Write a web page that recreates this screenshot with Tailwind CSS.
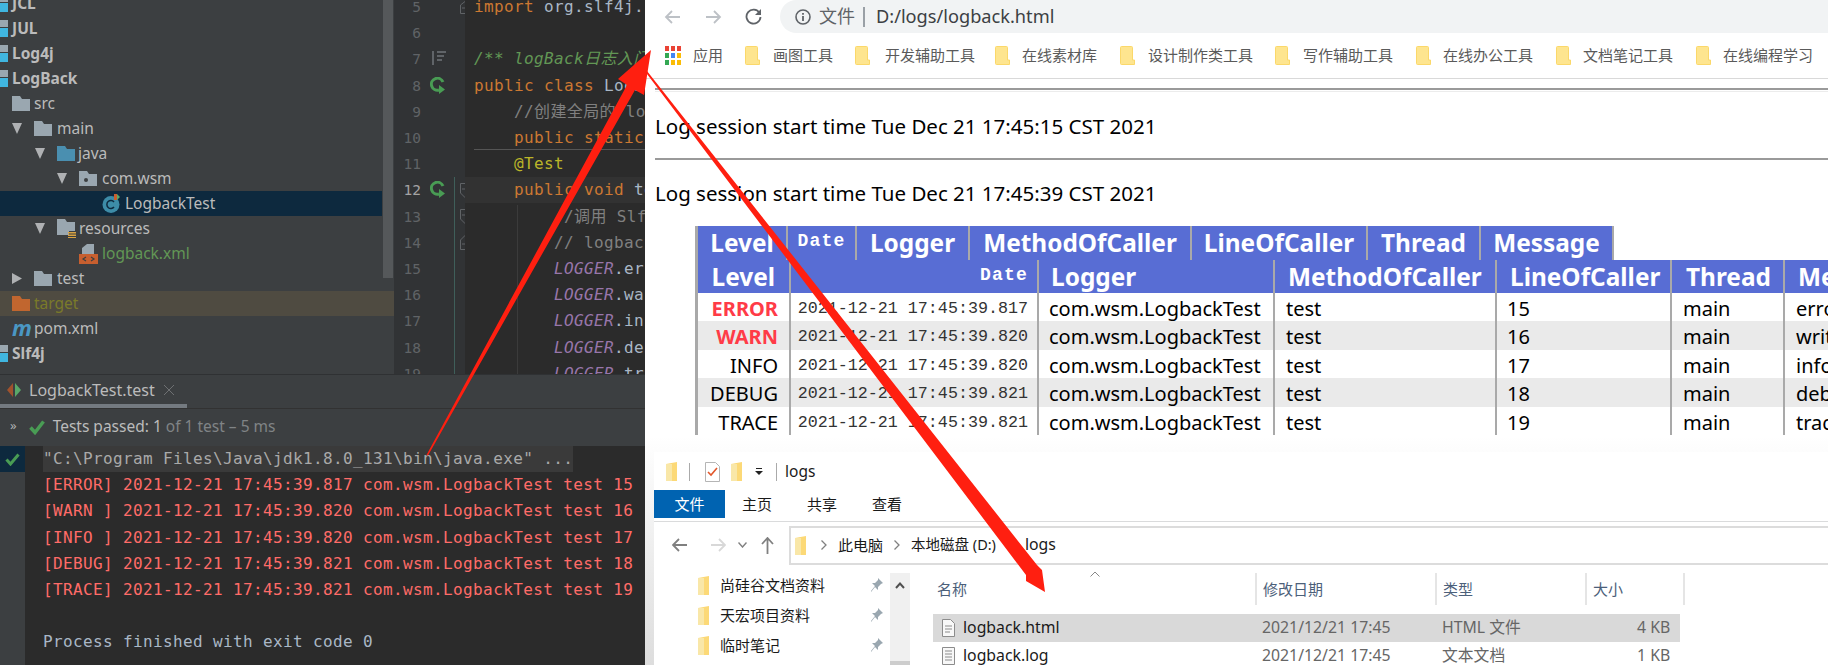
<!DOCTYPE html>
<html lang="zh">
<head>
<meta charset="utf-8">
<title>logback</title>
<script src="https://cdn.jsdelivr.net/npm/@tailwindcss/browser@4"></script>
</head>
<body class="m-0 w-[1828px] h-[665px] overflow-hidden bg-white">
<div class="relative flex w-[1828px] h-[665px] overflow-hidden font-['Noto_Sans','Noto_Sans_CJK_SC',sans-serif]">

  <!-- IDE -->
  <div class="w-[645px] h-[665px] shrink-0 flex flex-col bg-[#3c3f41] overflow-hidden">
    <div class="flex h-[374px] shrink-0 overflow-hidden">
      <!-- project tree -->
      <div class="w-[394px] shrink-0 flex overflow-hidden text-[15.5px] text-[#bbbbbb]">
        <div class="w-[382px] -mt-[9px] flex flex-col">
          <div class="h-[25px] flex items-center gap-[4px] font-bold shrink-0"><span class="w-[8px] h-[17px] flex flex-col"><i class="h-[7px] bg-[#9aa7b0]"></i><i class="h-[10px] bg-[#40b6e0] mt-px"></i></span>JCL</div>
          <div class="h-[25px] flex items-center gap-[4px] font-bold shrink-0"><span class="w-[8px] h-[17px] flex flex-col"><i class="h-[7px] bg-[#9aa7b0]"></i><i class="h-[9px] bg-[#40b6e0] mt-px"></i></span>JUL</div>
          <div class="h-[25px] flex items-center gap-[4px] font-bold shrink-0"><span class="w-[8px] h-[17px] flex flex-col"><i class="h-[7px] bg-[#9aa7b0]"></i><i class="h-[9px] bg-[#40b6e0] mt-px"></i></span>Log4j</div>
          <div class="h-[25px] flex items-center gap-[4px] font-bold shrink-0"><span class="w-[8px] h-[17px] flex flex-col"><i class="h-[7px] bg-[#9aa7b0]"></i><i class="h-[9px] bg-[#40b6e0] mt-px"></i></span>LogBack</div>
          <div class="h-[25px] flex items-center shrink-0 pl-[12px] gap-[4px]">
            <svg width="18" height="15" viewBox="0 0 18 15"><path d="M0 0h8l2 3h8v12H0z" fill="#9aa7b0"/></svg>src</div>
          <div class="h-[25px] flex items-center shrink-0 pl-[12px]">
            <svg class="mr-[12px]" width="10" height="11" viewBox="0 0 10 11"><path d="M0 0h10L5 11z" fill="#afb1b3"/></svg>
            <svg class="mr-[5px]" width="18" height="15" viewBox="0 0 18 15"><path d="M0 0h8l2 3h8v12H0z" fill="#9aa7b0"/></svg>main</div>
          <div class="h-[25px] flex items-center shrink-0 pl-[35px]">
            <svg class="mr-[12px]" width="10" height="11" viewBox="0 0 10 11"><path d="M0 0h10L5 11z" fill="#afb1b3"/></svg>
            <svg class="mr-[3px]" width="18" height="15" viewBox="0 0 18 15"><path d="M0 0h8l2 3h8v12H0z" fill="#4a8fb0"/></svg>java</div>
          <div class="h-[25px] flex items-center shrink-0 pl-[57px]">
            <svg class="mr-[12px]" width="10" height="11" viewBox="0 0 10 11"><path d="M0 0h10L5 11z" fill="#afb1b3"/></svg>
            <svg class="mr-[5px]" width="18" height="15" viewBox="0 0 18 15"><path d="M0 0h8l2 3h8v12H0z" fill="#9aa7b0"/><circle cx="7" cy="9" r="2" fill="#3c3f41"/></svg>com.wsm</div>
          <div class="h-[25px] flex items-center shrink-0 pl-[102px] bg-[#0d293e]">
            <svg class="mr-[5px]" width="18" height="19" viewBox="0 0 18 19"><circle cx="9" cy="10.500" r="8.500" fill="#3d8ca8"/><path d="M12 8a4 4 0 1 0 0 5" fill="none" stroke="#0d293e" stroke-width="1.500"/><path d="M12 0h3v6h-3z" fill="#c75f2f"/><path d="M15 0l3 3-3 3z" fill="#59a869"/></svg>LogbackTest</div>
          <div class="h-[25px] flex items-center shrink-0 pl-[35px]">
            <svg class="mr-[12px]" width="10" height="11" viewBox="0 0 10 11"><path d="M0 0h10L5 11z" fill="#afb1b3"/></svg>
            <svg class="mr-[3px]" width="19" height="19" viewBox="0 0 19 19"><path d="M0 0h8l2 3h8v9h-6v4H0z" fill="#9aa7b0"/><path d="M11 13h8v1.500h-8zM11 15.500h8V17h-8zM11 18h8v1h-8z" fill="#d9a343"/></svg>resources</div>
          <div class="h-[25px] flex items-center shrink-0 pl-[79px] text-[#629755]">
            <svg class="mr-[4px]" width="19" height="20" viewBox="0 0 19 20"><path d="M3 10V4l5-4h7v10z" fill="#9aa7b0"/><path d="M0 10h19v10H0z" fill="#c75f2f"/><path d="M7 13l-3 2 3 2M12 13l3 2-3 2" fill="none" stroke="#3c3f41" stroke-width="1.200"/></svg>logback.xml</div>
          <div class="h-[25px] flex items-center shrink-0 pl-[12px]">
            <svg class="mr-[12px]" width="10" height="11" viewBox="0 0 10 11"><path d="M0 0l10 5.500L0 11z" fill="#afb1b3"/></svg>
            <svg class="mr-[5px]" width="18" height="15" viewBox="0 0 18 15"><path d="M0 0h8l2 3h8v12H0z" fill="#9aa7b0"/></svg>test</div>
          <div class="h-[25px] flex items-center shrink-0 pl-[12px] gap-[4px] w-[394px] bg-[#4f4b41] text-[#7a7a2a]">
            <svg width="18" height="15" viewBox="0 0 18 15"><path d="M0 0h8l2 3h8v12H0z" fill="#c1662f"/></svg>target</div>
          <div class="h-[25px] flex items-center shrink-0 pl-[12px] gap-[4px]">
            <span class="w-[18px] text-[22px] leading-[20px] -mt-[3px] italic font-bold text-[#4a97c4]">m</span>pom.xml</div>
          <div class="h-[25px] flex items-center gap-[4px] font-bold shrink-0"><span class="w-[8px] h-[17px] flex flex-col"><i class="h-[7px] bg-[#9aa7b0]"></i><i class="h-[9px] bg-[#40b6e0] mt-px"></i></span>Slf4j</div>
        </div>
        <div class="w-[10px] ml-[1px] h-[278px] bg-[#55585a]"></div>
      </div>
      <!-- gutter -->
      <div class="relative w-[71px] shrink-0 bg-[#313335] overflow-hidden">
        <div class="-mt-[6px] w-[27px] text-right font-['DejaVu_Sans_Mono',monospace] text-[14.500px] leading-[26.200px] text-[#606366]">
          <div>5</div><div>6</div><div>7</div><div>8</div><div>9</div><div>10</div><div>11</div><div class="text-[#a4a3a3]">12</div><div>13</div><div>14</div><div>15</div><div>16</div><div>17</div><div>18</div><div>19</div>
        </div>
        <svg class="absolute left-[38px] top-[51px]" width="15" height="14" viewBox="0 0 15 14"><path d="M1 0v14M5 1h9M5 5h7M5 9h5" fill="none" stroke="#70757a" stroke-width="1.500"/></svg>
        <svg class="absolute left-[36px] top-[77px]" width="16" height="18" viewBox="0 0 16 18"><path d="M13 5a6 6 0 1 0-4 8" fill="none" stroke="#499c54" stroke-width="3"/><path d="M9 8l6 4.500L9 17z" fill="#499c54"/></svg>
        <svg class="absolute left-[36px] top-[181px]" width="16" height="18" viewBox="0 0 16 18"><path d="M13 5a6 6 0 1 0-4 8" fill="none" stroke="#499c54" stroke-width="3"/><path d="M9 8l6 4.500L9 17z" fill="#499c54"/></svg>
        <div class="absolute left-[60px] top-[177px] w-px h-[197px] bg-[#3f5f5a]"></div>
        <svg class="absolute left-[66px] top-[1px]" width="10" height="13" viewBox="0 0 10 13"><path d="M.5 4L5 .5 9.500 4v8.500h-9zM2 7h6" fill="none" stroke="#606366"/></svg>
        <svg class="absolute left-[66px] top-[183px]" width="10" height="15" viewBox="0 0 10 15"><path d="M.5 .5h9V10L5 14.500.5 10zM2 6h6" fill="none" stroke="#606366"/></svg>
        <svg class="absolute left-[66px] top-[209px]" width="10" height="15" viewBox="0 0 10 15"><path d="M.5 .5h9V10L5 14.500.5 10zM2 6h6" fill="none" stroke="#606366"/></svg>
        <svg class="absolute left-[66px] top-[235px]" width="10" height="15" viewBox="0 0 10 15"><path d="M.5 14.500h9V5L5 .5.500 5zM2 9h6" fill="none" stroke="#606366"/></svg>
      </div>
      <!-- code -->
      <div class="relative flex-1 bg-[#2b2b2b] overflow-hidden">
        <div class="absolute left-0 right-0 top-[177px] h-[26px] bg-[#323232]"></div>
        <div class="absolute left-[9px] right-0 top-[149px] h-px bg-[#555555]"></div>
        <div class="absolute left-[52px] top-[205px] w-px h-[169px] bg-[#3b3b3b]"></div>
        <div class="relative -mt-[6px] pl-[9px] [&>div]:whitespace-pre font-['DejaVu_Sans_Mono','Noto_Sans_CJK_SC',monospace] text-[16px] tracking-[0.37px] leading-[26.200px] text-[#a9b7c6]">
          <div><span class="text-[#cc7832]">import</span> org.slf4j.Logger;</div>
          <div>&nbsp;</div>
          <div class="italic text-[#629755]">/** logBack日志入门</div>
          <div><span class="text-[#cc7832]">public class</span> LogbackTest</div>
          <div class="text-[#808080]">    //创建全局的 logger</div>
          <div><span class="text-[#cc7832]">    public static</span></div>
          <div class="text-[#bbb529]">    @Test</div>
          <div><span class="text-[#cc7832]">    public void</span> test</div>
          <div class="text-[#808080]">        //调用 Slf</div>
          <div class="text-[#808080]">        // logback</div>
          <div>        <span class="italic text-[#9876aa]">LOGGER</span>.error</div>
          <div>        <span class="italic text-[#9876aa]">LOGGER</span>.warn</div>
          <div>        <span class="italic text-[#9876aa]">LOGGER</span>.info</div>
          <div>        <span class="italic text-[#9876aa]">LOGGER</span>.debug</div>
          <div>        <span class="italic text-[#9876aa]">LOGGER</span>.trace</div>
        </div>
      </div>
    </div>

    <!-- run panel -->
    <div class="flex-1 flex flex-col border-t border-[#2f3133] overflow-hidden">
      <div class="h-[34px] shrink-0 flex flex-col border-b border-[#323232]">
        <div class="flex-1 flex items-center text-[16px] text-[#bbbbbb]">
          <svg class="ml-[7px] mr-[8px]" width="14" height="14" viewBox="0 0 14 14"><path d="M6 0v14L0 7z" fill="#a0522d"/><path d="M8 0v14l6-7z" fill="#59a869"/></svg>
          LogbackTest.test
          <svg class="ml-[9px]" width="10" height="10" viewBox="0 0 10 10"><path d="M0 0l10 10M10 0L0 10" stroke="#6e7072" stroke-width="1"/></svg>
        </div>
        <div class="w-[187px] h-[4px] bg-[#747a80]"></div>
      </div>
      <div class="h-[37px] shrink-0 flex items-center text-[15.500px] text-[#bbbbbb] pb-px">
        <span class="ml-[10px] mr-[12px] text-[13px] leading-[13px] text-[#aeb0b2] -mt-[4px]">»</span>
        <svg class="mr-[8px]" width="16" height="15" viewBox="0 0 16 15"><path d="M1.500 7.500L6 12.500 14.500 1.500" fill="none" stroke="#499c54" stroke-width="3.500"/></svg>
        Tests passed:&nbsp;<span>1</span><span class="text-[#808486]">&nbsp;of 1 test – 5 ms</span>
      </div>
      <div class="flex-1 flex overflow-hidden">
        <div class="w-[25px] shrink-0">
          <div class="h-[26px] bg-[#0d293e] flex items-center justify-center"><svg width="15" height="13" viewBox="0 0 15 13"><path d="M1.500 6.500L5.500 11 13.500 1.500" fill="none" stroke="#499c54" stroke-width="3"/></svg></div>
        </div>
        <div class="flex-1 bg-[#2b2b2b] pl-[18px] [&>div]:whitespace-pre font-['DejaVu_Sans_Mono',monospace] text-[16px] tracking-[0.37px] leading-[26.200px] text-[#ff6b68] overflow-hidden">
          <div class="w-[530px] bg-[#3a3a3a] text-[#a9a9a9]">"C:\Program Files\Java\jdk1.8.0_131\bin\java.exe" ...</div>
          <div>[ERROR] 2021-12-21 17:45:39.817 com.wsm.LogbackTest test 15</div>
          <div>[WARN ] 2021-12-21 17:45:39.820 com.wsm.LogbackTest test 16</div>
          <div>[INFO ] 2021-12-21 17:45:39.820 com.wsm.LogbackTest test 17</div>
          <div>[DEBUG] 2021-12-21 17:45:39.821 com.wsm.LogbackTest test 18</div>
          <div>[TRACE] 2021-12-21 17:45:39.821 com.wsm.LogbackTest test 19</div>
          <div>&nbsp;</div>
          <div class="text-[#a9b7c6]">Process finished with exit code 0</div>
        </div>
      </div>
    </div>
  </div>

  <!-- browser -->
  <div class="flex-1 min-w-0 flex flex-col bg-white overflow-hidden">
    <div class="h-[33px] shrink-0 flex items-center">
      <svg class="ml-[19px]" width="17" height="16" viewBox="0 0 17 16"><path d="M16 8H2M8 2L2 8l6 6" fill="none" stroke="#bdc1c6" stroke-width="1.800"/></svg>
      <svg class="ml-[24px]" width="17" height="16" viewBox="0 0 17 16"><path d="M1 8h14M9 2l6 6-6 6" fill="none" stroke="#bdc1c6" stroke-width="1.800"/></svg>
      <svg class="ml-[23px]" width="17" height="17" viewBox="0 0 17 17"><path d="M14.500 5A7 7 0 1 0 15.500 9" fill="none" stroke="#5f6368" stroke-width="1.800"/><path d="M16 1v6h-6z" fill="#5f6368"/></svg>
      <div class="ml-[18px] flex-1 h-[33px] bg-[#f1f3f4] rounded-l-[17px] flex items-center">
        <svg class="ml-[15px]" width="16" height="16" viewBox="0 0 16 16"><circle cx="8" cy="8" r="7" fill="none" stroke="#5f6368" stroke-width="1.600"/><path d="M8 7v5M8 4v1.800" stroke="#5f6368" stroke-width="1.800"/></svg>
        <span class="ml-[8px] text-[18px] text-[#5f6368]">文件</span>
        <span class="ml-[8px] w-[2px] h-[20px] bg-[#9aa0a6]"></span>
        <span class="ml-[11px] text-[18.200px] text-[#3c4043]">D:/logs/logback.html</span>
      </div>
    </div>
    <div class="h-[46px] shrink-0 flex items-center border-b border-[#d9d9d9] text-[15px] text-[#5a5a5a] pl-[20px]">
      <svg class="mr-[12px]" width="16" height="19" viewBox="0 0 16 19"><g><rect width="4" height="5" fill="#ea4335"/><rect x="6" width="4" height="5" fill="#ea4335"/><rect x="12" width="4" height="5" fill="#ea4335"/><rect y="7" width="4" height="5" fill="#34a853"/><rect x="6" y="7" width="4" height="5" fill="#4285f4"/><rect x="12" y="7" width="4" height="5" fill="#fbbc05"/><rect y="14" width="4" height="5" fill="#34a853"/><rect x="6" y="14" width="4" height="5" fill="#fbbc05"/><rect x="12" y="14" width="4" height="5" fill="#fbbc05"/></g></svg>
      <span class="w-[52px]">应用</span>
      <svg class="mr-[13px]" width="15" height="19" viewBox="0 0 15 19"><path d="M1.500 .5h10a1 1 0 0 1 1 1V14h2v4.500h-13a1 1 0 0 1-1-1v-16a1 1 0 0 1 1-1z" fill="#fee58f" stroke="#fbd86a"/></svg>
      <span class="w-[82px] whitespace-nowrap">画图工具</span>
      <svg class="mr-[15px]" width="15" height="19" viewBox="0 0 15 19"><path d="M1.500 .5h10a1 1 0 0 1 1 1V14h2v4.500h-13a1 1 0 0 1-1-1v-16a1 1 0 0 1 1-1z" fill="#fee58f" stroke="#fbd86a"/></svg>
      <span class="w-[110px] whitespace-nowrap">开发辅助工具</span>
      <svg class="mr-[12px]" width="15" height="19" viewBox="0 0 15 19"><path d="M1.500 .5h10a1 1 0 0 1 1 1V14h2v4.500h-13a1 1 0 0 1-1-1v-16a1 1 0 0 1 1-1z" fill="#fee58f" stroke="#fbd86a"/></svg>
      <span class="w-[98px] whitespace-nowrap">在线素材库</span>
      <svg class="mr-[13px]" width="15" height="19" viewBox="0 0 15 19"><path d="M1.500 .5h10a1 1 0 0 1 1 1V14h2v4.500h-13a1 1 0 0 1-1-1v-16a1 1 0 0 1 1-1z" fill="#fee58f" stroke="#fbd86a"/></svg>
      <span class="w-[127px] whitespace-nowrap">设计制作类工具</span>
      <svg class="mr-[13px]" width="15" height="19" viewBox="0 0 15 19"><path d="M1.500 .5h10a1 1 0 0 1 1 1V14h2v4.500h-13a1 1 0 0 1-1-1v-16a1 1 0 0 1 1-1z" fill="#fee58f" stroke="#fbd86a"/></svg>
      <span class="w-[113px] whitespace-nowrap">写作辅助工具</span>
      <svg class="mr-[12px]" width="15" height="19" viewBox="0 0 15 19"><path d="M1.500 .5h10a1 1 0 0 1 1 1V14h2v4.500h-13a1 1 0 0 1-1-1v-16a1 1 0 0 1 1-1z" fill="#fee58f" stroke="#fbd86a"/></svg>
      <span class="w-[113px] whitespace-nowrap">在线办公工具</span>
      <svg class="mr-[12px]" width="15" height="19" viewBox="0 0 15 19"><path d="M1.500 .5h10a1 1 0 0 1 1 1V14h2v4.500h-13a1 1 0 0 1-1-1v-16a1 1 0 0 1 1-1z" fill="#fee58f" stroke="#fbd86a"/></svg>
      <span class="w-[113px] whitespace-nowrap">文档笔记工具</span>
      <svg class="mr-[12px]" width="15" height="19" viewBox="0 0 15 19"><path d="M1.500 .5h10a1 1 0 0 1 1 1V14h2v4.500h-13a1 1 0 0 1-1-1v-16a1 1 0 0 1 1-1z" fill="#fee58f" stroke="#fbd86a"/></svg>
      <span class="whitespace-nowrap">在线编程学习</span>
    </div>

    <!-- page -->
    <div class="h-[357px] shrink-0 pl-[10px] text-[20.500px] text-black flex flex-col">
      <div class="mt-[9px] h-[2px] bg-[#9a9a9a]"></div>
      <div class="h-px mt-[1px] bg-[#ececec]"></div>
      <div class="h-[66px] flex items-center pt-[2px]">Log session start time Tue Dec 21 17:45:15 CST 2021</div>
      <div class="h-[2px] bg-[#9a9a9a]"></div>
      <div class="h-[65px] flex items-center pt-[2px]">Log session start time Tue Dec 21 17:45:39 CST 2021</div>

      <div class="ml-[40px] mt-[1px] flex flex-col">
        <div class="flex h-[34px] font-bold text-[24.400px] text-white text-center leading-[33px]">
          <div class="w-[91px] border-l-[3px] border-[#a9a9a9] bg-[#586dd4]">Level</div>
          <div class="w-[69px] border-l-[2px] border-[#a9a9a9] bg-[#586dd4] font-['Liberation_Mono',monospace] text-[18px] tracking-[1.200px] leading-[30px]">Date</div>
          <div class="w-[113px] border-l-[2px] border-[#a9a9a9] bg-[#586dd4]">Logger</div>
          <div class="w-[222px] border-l-[2px] border-[#a9a9a9] bg-[#586dd4]">MethodOfCaller</div>
          <div class="w-[176px] border-l-[2px] border-[#a9a9a9] bg-[#586dd4]">LineOfCaller</div>
          <div class="w-[113px] border-l-[2px] border-[#a9a9a9] bg-[#586dd4]">Thread</div>
          <div class="w-[135px] border-x-[2px] border-[#a9a9a9] bg-[#586dd4]">Message</div>
        </div>
        <div class="grid grid-cols-[94px_248px_236px_222px_175px_113px_200px] w-[1288px] grid-rows-[33px] auto-rows-[28.400px] text-[20px] leading-[31px] whitespace-nowrap [&>div]:border-l-[2px] [&>div]:border-[#a9a9a9]">
          <div class="bg-[#586dd4] text-white font-bold text-[24.400px] leading-[33px] text-right pr-[14px] border-l-[3px]!">Level</div>
          <div class="bg-[#586dd4] text-white font-bold font-['Liberation_Mono',monospace] text-[18px] tracking-[1.200px] leading-[30px] text-right pr-[9px]">Date</div>
          <div class="bg-[#586dd4] text-white font-bold text-[24.400px] leading-[33px] pl-[12px]">Logger</div>
          <div class="bg-[#586dd4] text-white font-bold text-[24.400px] leading-[33px] pl-[13px]">MethodOfCaller</div>
          <div class="bg-[#586dd4] text-white font-bold text-[24.400px] leading-[33px] pl-[13px]">LineOfCaller</div>
          <div class="bg-[#586dd4] text-white font-bold text-[24.400px] leading-[33px] pl-[14px]">Thread</div>
          <div class="bg-[#586dd4] text-white font-bold text-[24.400px] leading-[33px] pl-[13px]">Message</div>

          <div class="text-right pr-[11px] font-bold text-[#ff3b47] border-l-[3px]!">ERROR</div>
          <div class="text-right pr-[9px] font-['Liberation_Mono',monospace] text-[16.700px] text-[#333333]">2021-12-21 17:45:39.817</div>
          <div class="pl-[10px]">com.wsm.LogbackTest</div><div class="pl-[11px]">test</div><div class="pl-[10px]">15</div><div class="pl-[11px]">main</div><div class="pl-[11px]">error</div>

          <div class="bg-[#eaeaea] text-right pr-[11px] font-bold text-[#ff3b47] border-l-[3px]!">WARN</div>
          <div class="bg-[#eaeaea] text-right pr-[9px] font-['Liberation_Mono',monospace] text-[16.700px] text-[#333333]">2021-12-21 17:45:39.820</div>
          <div class="bg-[#eaeaea] pl-[10px]">com.wsm.LogbackTest</div><div class="bg-[#eaeaea] pl-[11px]">test</div><div class="bg-[#eaeaea] pl-[10px]">16</div><div class="bg-[#eaeaea] pl-[11px]">main</div><div class="bg-[#eaeaea] pl-[11px]">writing</div>

          <div class="text-right pr-[11px] border-l-[3px]!">INFO</div>
          <div class="text-right pr-[9px] font-['Liberation_Mono',monospace] text-[16.700px] text-[#333333]">2021-12-21 17:45:39.820</div>
          <div class="pl-[10px]">com.wsm.LogbackTest</div><div class="pl-[11px]">test</div><div class="pl-[10px]">17</div><div class="pl-[11px]">main</div><div class="pl-[11px]">info</div>

          <div class="bg-[#eaeaea] text-right pr-[11px] border-l-[3px]!">DEBUG</div>
          <div class="bg-[#eaeaea] text-right pr-[9px] font-['Liberation_Mono',monospace] text-[16.700px] text-[#333333]">2021-12-21 17:45:39.821</div>
          <div class="bg-[#eaeaea] pl-[10px]">com.wsm.LogbackTest</div><div class="bg-[#eaeaea] pl-[11px]">test</div><div class="bg-[#eaeaea] pl-[10px]">18</div><div class="bg-[#eaeaea] pl-[11px]">main</div><div class="bg-[#eaeaea] pl-[11px]">debug</div>

          <div class="text-right pr-[11px] border-l-[3px]!">TRACE</div>
          <div class="text-right pr-[9px] font-['Liberation_Mono',monospace] text-[16.700px] text-[#333333]">2021-12-21 17:45:39.821</div>
          <div class="pl-[10px]">com.wsm.LogbackTest</div><div class="pl-[11px]">test</div><div class="pl-[10px]">19</div><div class="pl-[11px]">main</div><div class="pl-[11px]">trace</div>
        </div>
      </div>
    </div>

    <!-- explorer window -->
    <div class="flex-1 bg-gradient-to-b from-white to-[#dddddd] pl-[9px] overflow-hidden flex flex-col">
      <div class="mt-[16px] h-[213px] shrink-0 bg-white flex flex-col text-[#1a1a1a] text-[15px]">
        <div class="h-[38px] shrink-0 flex items-center pt-px">
          <svg class="ml-[12px]" width="12" height="19" viewBox="0 0 12 19"><path d="M0 2l11-2v19H0z" fill="#fcd977"/><path d="M0 2h6v17H0z" fill="#f9e7a8"/></svg>
          <span class="ml-[11px] w-px h-[18px] bg-[#aaaaaa]"></span>
          <svg class="ml-[15px]" width="15" height="20" viewBox="0 0 15 20"><path d="M.5 .5h10l4 4v15H.5z" fill="#fff" stroke="#b5b5b5"/><path d="M3 10l3 3 6-7" fill="none" stroke="#e2572b" stroke-width="1.600"/></svg>
          <svg class="ml-[11px]" width="12" height="19" viewBox="0 0 12 19"><path d="M0 2l11-2v19H0z" fill="#fcd977"/><path d="M0 2h6v17H0z" fill="#f9e7a8"/></svg>
          <svg class="ml-[12px]" width="8" height="7" viewBox="0 0 8 7"><path d="M1 0h6v1H1zM0 3h8L4 7z" fill="#222"/></svg>
          <span class="ml-[13px] w-px h-[18px] bg-[#aaaaaa]"></span>
          <span class="ml-[8px] text-[15.500px]">logs</span>
        </div>
        <div class="h-[32px] shrink-0 flex border-b border-[#dadbdc]">
          <div class="w-[71px] h-[28px] bg-[#0063b1] text-white flex items-center justify-center text-[15px]">文件</div>
          <div class="ml-[17px] h-[28px] flex items-center">主页</div>
          <div class="ml-[35px] h-[28px] flex items-center">共享</div>
          <div class="ml-[35px] h-[28px] flex items-center">查看</div>
        </div>
        <div class="h-[46px] shrink-0 flex items-center">
          <svg class="ml-[18px]" width="15" height="14" viewBox="0 0 15 14"><path d="M15 7H2M7 1L1 7l6 6" fill="none" stroke="#808080" stroke-width="1.800"/></svg>
          <svg class="ml-[24px]" width="15" height="14" viewBox="0 0 15 14"><path d="M0 7h13M8 1l6 6-6 6" fill="none" stroke="#d8d8d8" stroke-width="1.800"/></svg>
          <svg class="ml-[12px]" width="9" height="6" viewBox="0 0 9 6"><path d="M.5 .5L4.500 5l4-4.500" fill="none" stroke="#808080" stroke-width="1.400"/></svg>
          <svg class="ml-[14px]" width="13" height="17" viewBox="0 0 13 17"><path d="M6.500 17V2M1 7l5.500-6L12 7" fill="none" stroke="#808080" stroke-width="1.800"/></svg>
          <div class="ml-[15px] flex-1 h-[39px] border-l-2 border-y-2 border-[#dcdcdc] flex items-center">
            <svg class="ml-[4px]" width="12" height="19" viewBox="0 0 12 19"><path d="M0 2l11-2v19H0z" fill="#fcd977"/><path d="M0 2h6v17H0z" fill="#f9e7a8"/></svg>
            <svg class="ml-[14px]" width="6" height="10" viewBox="0 0 6 10"><path d="M.5 .5L5 5 .5 9.500" fill="none" stroke="#808080" stroke-width="1.300"/></svg>
            <span class="ml-[11px]">此电脑</span>
            <svg class="ml-[11px]" width="6" height="10" viewBox="0 0 6 10"><path d="M.5 .5L5 5 .5 9.500" fill="none" stroke="#808080" stroke-width="1.300"/></svg>
            <span class="ml-[11px] whitespace-nowrap text-[14.500px]">本地磁盘 (D:)</span>
            <span class="ml-[29px] text-[15.800px]">logs</span>
          </div>
        </div>
        <div class="flex-1 flex overflow-hidden">
          <div class="w-[236px] shrink-0 relative pl-[44px] pt-[2px]">
            <div class="h-[30px] flex items-center"><svg class="mr-[10px]" width="12" height="19" viewBox="0 0 12 19"><path d="M0 2l11-2v19H0z" fill="#fcd977"/><path d="M0 2h6v17H0z" fill="#f9e7a8"/></svg>尚硅谷文档资料<svg class="ml-[45px]" width="13" height="14" viewBox="0 0 13 14"><path d="M8 0l5 5-2 1-3 3v3L5 9l-4 5 0-1 4-5-3-3h3l3-3z" fill="#9aa7b0"/></svg></div>
            <div class="h-[30px] flex items-center"><svg class="mr-[10px]" width="12" height="19" viewBox="0 0 12 19"><path d="M0 2l11-2v19H0z" fill="#fcd977"/><path d="M0 2h6v17H0z" fill="#f9e7a8"/></svg>天宏项目资料<svg class="ml-[60px]" width="13" height="14" viewBox="0 0 13 14"><path d="M8 0l5 5-2 1-3 3v3L5 9l-4 5 0-1 4-5-3-3h3l3-3z" fill="#9aa7b0"/></svg></div>
            <div class="h-[30px] flex items-center"><svg class="mr-[10px]" width="12" height="19" viewBox="0 0 12 19"><path d="M0 2l11-2v19H0z" fill="#fcd977"/><path d="M0 2h6v17H0z" fill="#f9e7a8"/></svg>临时笔记<svg class="ml-[90px]" width="13" height="14" viewBox="0 0 13 14"><path d="M8 0l5 5-2 1-3 3v3L5 9l-4 5 0-1 4-5-3-3h3l3-3z" fill="#9aa7b0"/></svg></div>
            <div class="absolute left-[236px] top-[5px] bottom-0 w-[20px] bg-[#f0f0f0] flex flex-col items-center pt-[9px]">
              <svg width="10" height="7" viewBox="0 0 10 7"><path d="M1 6l4-4.500L9 6" fill="none" stroke="#505050" stroke-width="2"/></svg>
              <div class="mt-auto h-[4px] w-[20px] bg-[#cdcdcd]"></div>
            </div>
          </div>
          <div class="ml-[43px] flex-1 pt-[5px] relative">
            <svg class="absolute left-[157px] top-[3px]" width="10" height="6" viewBox="0 0 10 6"><path d="M.5 5.500L5 1l4.500 4.500" fill="none" stroke="#888" /></svg>
            <div class="h-[32px] flex items-center text-[#4c607a]">
              <span class="w-[322px] pl-[4px]">名称</span>
              <span class="w-[180px] h-[32px] border-l-2 border-[#e5e5e5] pl-[6px] flex items-center">修改日期</span>
              <span class="w-[150px] h-[32px] border-l-2 border-[#e5e5e5] pl-[6px] flex items-center">类型</span>
              <span class="w-[100px] h-[32px] border-x-2 border-[#e5e5e5] pl-[6px] flex items-center">大小</span>
            </div>
            <div class="mt-[9px] w-[747px] h-[28px] bg-[#d9d9d9] flex items-center text-[15.800px]">
              <svg class="ml-[9px] mr-[8px]" width="13" height="18" viewBox="0 0 13 18"><path d="M.5 .5h8l4 4v13H.5zM3 7h7M3 10h7M3 13h5" fill="#f8f8f8" stroke="#8c8c8c"/></svg>
              <span class="w-[299px]">logback.html</span>
              <span class="w-[180px] text-[#666666]">2021/12/21 17:45</span>
              <span class="w-[195px] text-[#666666]">HTML 文件</span>
              <span class="w-[33px] whitespace-nowrap text-right text-[#666666]">4 KB</span>
            </div>
            <div class="w-[747px] h-[27px] flex items-center text-[15.800px]">
              <svg class="ml-[9px] mr-[8px]" width="13" height="18" viewBox="0 0 13 18"><path d="M.5 .5h12v17H.5zM3 4h7M3 7h7M3 10h7M3 13h7" fill="#f8f8f8" stroke="#8c8c8c"/></svg>
              <span class="w-[299px]">logback.log</span>
              <span class="w-[180px] text-[#666666]">2021/12/21 17:45</span>
              <span class="w-[195px] text-[#666666]">文本文档</span>
              <span class="w-[33px] whitespace-nowrap text-right text-[#666666]">1 KB</span>
            </div>
          </div>
        </div>
      </div>
    </div>
  </div>

  <!-- annotation arrows -->
  <svg class="absolute inset-0 pointer-events-none" width="1828" height="665" viewBox="0 0 1828 665">
    <polygon points="426.500,455 428,455.500 635,90 644,95 651,50 618,79 627,85" fill="#ff1f10"/>
    <polygon points="645.500,72 647,71 1037,565 1042,570 1045,592 1026,581 1026,575" fill="#ff1f10"/>
  </svg>
</div>
</body>
</html>
